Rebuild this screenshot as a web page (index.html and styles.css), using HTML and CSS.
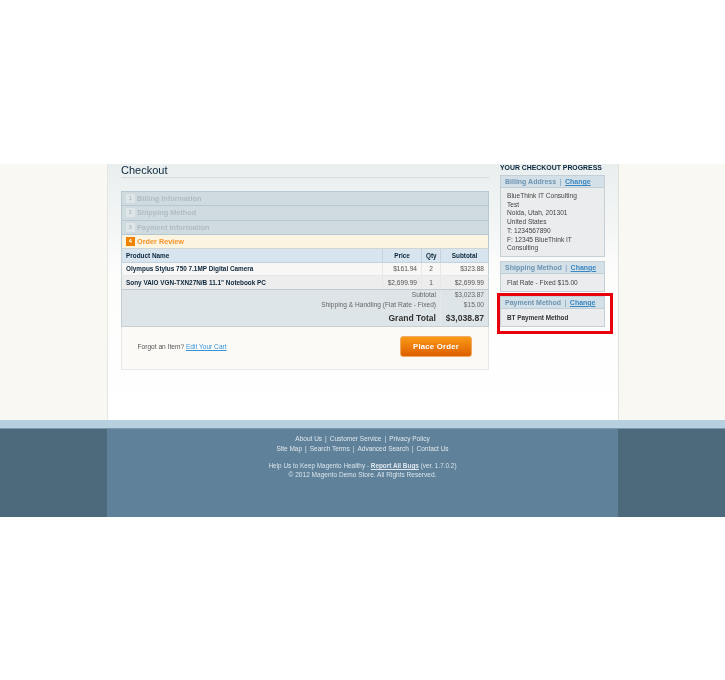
FILE: index.html
```html
<!DOCTYPE html>
<html lang="en">
<head>
	<meta charset="utf-8">
	<title>Checkout</title>
	<link rel="stylesheet" href="styles.css">
</head>
<body>
	<div class="page-top"></div>

	<div class="wrapper">
		<div class="main">
			<div class="col-main">
				<div class="page-title"><h1>Checkout</h1></div>

				<ol class="steps">
					<li class="step"><span class="num">1</span>Billing Information</li>
					<li class="step"><span class="num">2</span>Shipping Method</li>
					<li class="step"><span class="num">3</span>Payment Information</li>
					<li class="step active"><span class="num">4</span>Order Review</li>
				</ol>

				<table class="review">
					<thead>
						<tr>
							<th class="name">Product Name</th>
							<th class="price">Price</th>
							<th class="qty">Qty</th>
							<th class="sub">Subtotal</th>
						</tr>
					</thead>
					<tbody>
						<tr>
							<td class="name">Olympus Stylus 750 7.1MP Digital Camera</td>
							<td class="right">$161.94</td>
							<td class="center">2</td>
							<td class="right">$323.88</td>
						</tr>
						<tr class="even">
							<td class="name">Sony VAIO VGN-TXN27N/B 11.1" Notebook PC</td>
							<td class="right">$2,699.99</td>
							<td class="center">1</td>
							<td class="right">$2,699.99</td>
						</tr>
					</tbody>
					<tfoot>
						<tr class="t-sub">
							<td colspan="3">Subtotal</td>
							<td>$3,023.87</td>
						</tr>
						<tr class="t-ship">
							<td colspan="3">Shipping &amp; Handling (Flat Rate - Fixed)</td>
							<td>$15.00</td>
						</tr>
						<tr class="t-grand">
							<td colspan="3">Grand Total</td>
							<td>$3,038.87</td>
						</tr>
					</tfoot>
				</table>

				<div class="buttons-set">
					<p class="forgot">Forgot an Item? <a href="#">Edit Your Cart</a></p>
					<button class="btn-order" type="button">Place Order</button>
				</div>
			</div>

			<div class="col-right">
				<h2 class="progress-title">Your Checkout Progress</h2>

				<div class="block billing">
					<div class="block-head">Billing Address<span class="sep">|</span><a href="#">Change</a></div>
					<div class="block-body">
						BlueThink IT Consulting<br>
						Test<br>
						Noida, Utah, 201301<br>
						United States<br>
						T: 1234567890<br>
						F: 12345 BlueThink IT Consulting
					</div>
				</div>

				<div class="block shipping">
					<div class="block-head">Shipping Method<span class="sep">|</span><a href="#">Change</a></div>
					<div class="block-body">Flat Rate - Fixed $15.00</div>
				</div>

				<div class="block payment">
					<div class="block-head">Payment Method<span class="sep">|</span><a href="#">Change</a></div>
					<div class="block-body"><b>BT Payment Method</b></div>
					<div class="highlight"></div>
				</div>
			</div>
		</div>
	</div>

	<div class="footer-band"></div>

	<div class="footer-wrap">
		<div class="footer">
			<ul class="links">
				<li><a href="#">About Us</a></li>
				<li><a href="#">Customer Service</a></li>
				<li><a href="#">Privacy Policy</a></li>
			</ul>
			<ul class="links">
				<li><a href="#">Site Map</a></li>
				<li><a href="#">Search Terms</a></li>
				<li><a href="#">Advanced Search</a></li>
				<li><a href="#">Contact Us</a></li>
			</ul>
			<p class="bugs">Help Us to Keep Magento Healthy - <a href="#">Report All Bugs</a> (ver. 1.7.0.2)</p>
			<p class="copy">&copy; 2012 Magento Demo Store. All Rights Reserved.</p>
		</div>
	</div>
</body>
</html>
```

FILE: styles.css
```css
* { box-sizing: border-box; }

body {
	margin: 0;
	background: #fff;
	font-family: "Liberation Sans", Arial, sans-serif;
	font-size: 6.6px;
	color: #444;
}

a { color: #3a94d8; }

.page-top { height: 164px; }

.wrapper {
	height: 256px;
	background: #faf8f3;
}
.main {
	display: flex;
	width: 512px;
	height: 100%;
	margin-left: 107px;
	padding: 0 13px;
	border-left: 1px solid #e4e6e2;
	border-right: 1px solid #dfe1dd;
	background: linear-gradient(#e9eeee, #fdfdfc 45%, #fff);
}

/* the reference is a scaled down capture, text is a bit soft */
.col-main, .col-right, .footer > * { filter: blur(.3px); }

/* left column */
.col-main { width: 368px; }

.page-title {
	height: 14px;
	border-bottom: 1px solid #d6dcdc;
}
.page-title h1 {
	margin: 0;
	font-size: 11px;
	font-weight: normal;
	line-height: 12px;
	color: #0a263c;
}

.steps {
	margin: 13px 0 0;
	padding: 0;
	list-style: none;
	border-top: 1px solid #b6c8d2;
	border-left: 1px solid #b6c8d2;
	border-right: 1px solid #b6c8d2;
}
.step {
	display: flex;
	align-items: center;
	height: 14.3px;
	padding-left: 4px;
	border-bottom: 1px solid #b6c8d2;
	background: #d0dbe0;
	font-size: 7.3px;
	font-weight: bold;
	color: #b0bcc3;
}
.num {
	width: 8.5px;
	height: 9px;
	margin-right: 2.5px;
	background: #dfe6e9;
	font-size: 5.5px;
	line-height: 9px;
	text-align: center;
}
.step.active {
	background: #fbf4e1;
	border-bottom-color: #cfd4d4;
	color: #f5932a;
}
.step.active .num {
	background: #f18200;
	color: #fff;
}

.review {
	width: 100%;
	border-collapse: collapse;
	table-layout: fixed;
	border-left: 1px solid #c4cfd4;
	border-right: 1px solid #c4cfd4;
}
.review thead th {
	height: 13px;
	padding: 0 4px;
	background: #d9e5ee;
	border-bottom: 1px solid #c2d3e0;
	font-size: 6.4px;
	font-weight: bold;
	color: #0a263c;
	text-align: center;
}
.review th.name { width: 261px; text-align: left; }
.review th.price { width: 39px; }
.review th.qty { width: 19px; }
.review th.sub { width: 48px; }
.review thead th + th { border-left: 1px solid #c2d3e0; }
.review tbody td {
	height: 13px;
	padding: 0 4px;
	background: #f8f7f5;
	border-bottom: 1px solid #e4e8ea;
	color: #555;
}
.review tbody td + td { border-left: 1px solid #e4e8ea; }
.review tbody .even td {
	height: 14px;
	background: #eeeded;
	border-bottom: 1px solid #bfcbd1;
}
.review td.name { font-size: 6.4px; font-weight: bold; color: #0a263c; }
.review td.right { text-align: right; }
.review td.center { text-align: center; }

.review tfoot td {
	padding: 0 4px;
	background: #dee5e8;
	text-align: right;
	color: #666;
}
.review tfoot td + td { border-left: 1px solid #e4e9eb; }
.t-sub td { height: 10px; }
.t-ship td { height: 11px; }
.review .t-grand td {
	height: 16px;
	border-bottom: 1px solid #c8d0d3;
	font-size: 8.6px;
	font-weight: bold;
	color: #333;
}

.buttons-set {
	display: flex;
	align-items: center;
	justify-content: space-between;
	height: 43px;
	padding: 0 16px 2px 15.5px;
	background: #fbfaf6;
	border: 1px solid #e6e9e8;
	border-top: 0;
}
.forgot { margin: 0; color: #555; }
.btn-order {
	width: 72px;
	height: 21px;
	padding: 0;
	border: 1px solid #eeaa66;
	border-radius: 3px;
	background: linear-gradient(#fb9a17, #dd5f00);
	font-family: inherit;
	font-size: 7.8px;
	font-weight: bold;
	letter-spacing: .2px;
	color: #fff;
}

/* right column */
.col-right {
	width: 105px;
	margin-left: 11px;
}
.progress-title {
	height: 11px;
	margin: 0;
	font-size: 6.9px;
	font-weight: bold;
	line-height: 7px;
	white-space: nowrap;
	text-transform: uppercase;
	color: #0a263c;
}
.block {
	position: relative;
	margin-bottom: 4px;
	border: 1px solid #c4d0d6;
	background: #ebeced;
}
.block-head {
	height: 12px;
	padding-left: 4px;
	background: #d3e0e8;
	border-bottom: 1px solid #c0ced6;
	font-size: 7px;
	font-weight: bold;
	line-height: 11px;
	color: #6c93b1;
}
.block-head a { color: #3a86c0; }
.sep { margin: 0 3.5px; color: #6c93b1; font-weight: normal; }
.block-body {
	padding: 4px 6px 3px;
	line-height: 8.7px;
	color: #444;
}
.shipping { height: 31px; }
.shipping .block-body { padding-top: 5px; }
.payment { height: 31px; }
.payment .block-body { padding-top: 5px; }
.payment b { font-size: 6.4px; color: #333; }

.highlight {
	position: absolute;
	top: -4px;
	left: -4px;
	width: 116px;
	height: 41px;
	border: 3px solid #e9000d;
}

/* footer */
.footer-band {
	height: 9px;
	background: #b6d0e0;
	border-bottom: 1px solid #7a98a9;
}
.footer-wrap {
	height: 88px;
	background: #4d6a7d;
}
.footer {
	width: 511px;
	height: 100%;
	margin-left: 107px;
	padding-top: 5px;
	background: #5f8199;
	font-size: 6.4px;
	text-align: center;
	line-height: 9.5px;
	color: #d8e4ec;
}
.footer a { color: #e0e8ee; text-decoration: none; }
.links {
	display: flex;
	justify-content: center;
	margin: 0;
	padding: 0;
	list-style: none;
	font-size: 6.5px;
}
.links li + li::before { content: "|"; margin: 0 3px; }
.bugs { height: 9px; margin: 8px 0 0; }
.footer .bugs a { font-weight: bold; text-decoration: underline; }
.copy { margin: 0; font-size: 6.55px; }
```
